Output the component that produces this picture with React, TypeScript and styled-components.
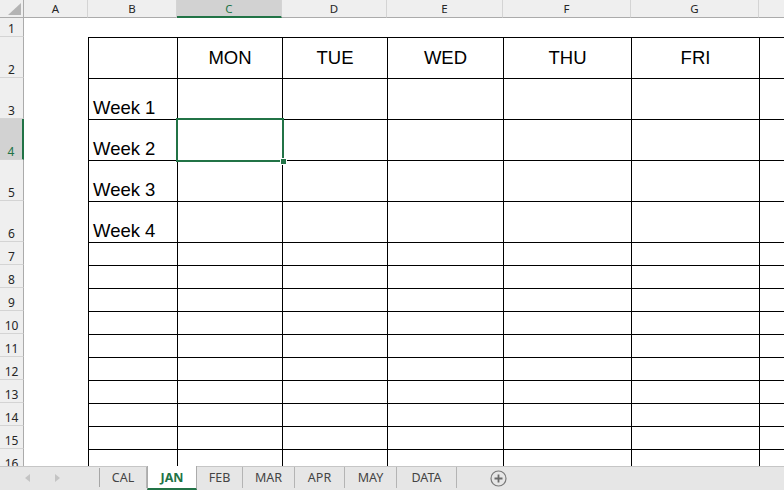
import { Fragment } from 'react';
import styled, { createGlobalStyle } from 'styled-components';

interface HeaderProps {
  active?: boolean;
}

interface CellProps {
  bordered?: boolean;
  align?: 'center' | 'week';
}

interface TabProps {
  active?: boolean;
}

const GlobalStyle = createGlobalStyle`
  html, body {
    margin: 0;
    padding: 0;
    background: #ffffff;
    overflow: hidden;
  }
  * {
    box-sizing: border-box;
  }
`;

const green = '#217346';

// H is only partly on screen, its letter sits past the window edge
const columns = ['A', 'B', 'C', 'D', 'E', 'F', 'G', ''];
const days = ['MON', 'TUE', 'WED', 'THU', 'FRI'];
const weeks = ['Week 1', 'Week 2', 'Week 3', 'Week 4'];
const sheets = ['CAL', 'JAN', 'FEB', 'MAR', 'APR', 'MAY', 'DATA'];

const Window = styled.div`
  width: 784px;
  height: 490px;
  display: flex;
  flex-direction: column;
  overflow: hidden;
  font-family: 'Noto Sans', 'Open Sans', sans-serif;
`;

const Grid = styled.div`
  width: 784px;
  height: 466px;
  overflow: hidden;
  display: grid;
  grid-template-columns: 24px 64px 89px 105px 105px 116px 128px 128px 64px;
  grid-template-rows: 18px 19px repeat(5, 41px) repeat(10, 23px);
`;

const Corner = styled.div`
  background: #efefef;
  border-right: 1px solid #ababab;
  border-bottom: 1px solid #ababab;
  display: flex;
  align-items: flex-end;
  justify-content: flex-end;
  padding: 0 2px 2px 0;
`;

const ColHeader = styled.div<HeaderProps>`
  background: ${(p) => (p.active ? '#d2d2d2' : '#efefef')};
  border-right: 1px solid #d4d4d4;
  border-bottom: ${(p) => (p.active ? `2px solid ${green}` : '1px solid #ababab')};
  color: ${(p) => (p.active ? green : '#262626')};
  font-size: 11.5px;
  display: flex;
  align-items: center;
  justify-content: center;
  line-height: 1;
  padding-top: ${(p) => (p.active ? '1px' : '0')};
`;

const RowHeader = styled.div<HeaderProps>`
  background: ${(p) => (p.active ? '#d2d2d2' : '#efefef')};
  border-right: ${(p) => (p.active ? `2px solid ${green}` : '1px solid #ababab')};
  border-bottom: 1px solid #d4d4d4;
  color: ${(p) => (p.active ? green : '#262626')};
  font-size: 12px;
  display: flex;
  align-items: flex-end;
  justify-content: center;
  padding-bottom: 1px;
  line-height: 1;
`;

const Cell = styled.div<CellProps>`
  position: relative;
  background: #ffffff;
  border-top: ${(p) => (p.bordered ? '1px solid #000000' : 'none')};
  border-left: ${(p) => (p.bordered ? '1px solid #000000' : 'none')};
  font-family: 'Liberation Sans', Arial, sans-serif;
  font-size: 18.5px;
  line-height: 22px;
  color: #000000;
  display: flex;
  white-space: nowrap;
  align-items: ${(p) => (p.align === 'week' ? 'flex-end' : 'center')};
  justify-content: ${(p) => (p.align === 'week' ? 'flex-start' : 'center')};
  padding-left: ${(p) => (p.align === 'week' ? '4px' : '0')};
`;

const Selection = styled.div`
  position: absolute;
  left: -2px;
  top: -2px;
  right: -2px;
  bottom: -2px;
  border: 2px solid ${green};
  z-index: 2;
  pointer-events: none;
`;

const FillHandle = styled.div`
  position: absolute;
  right: -5px;
  bottom: -5px;
  width: 7px;
  height: 7px;
  background: ${green};
  border: 1px solid #ffffff;
`;

const TabBar = styled.div`
  height: 24px;
  display: flex;
  align-items: stretch;
  background: #e6e6e6;
  border-top: 1px solid #c6c6c6;
`;

const NavArea = styled.div`
  width: 100px;
  display: flex;
  align-items: center;
  padding-left: 25px;
  gap: 23px;
  border-right: 1px solid #a6a6a6;
  margin: 1px 0 3px;
`;

const Tab = styled.div<TabProps>`
  display: flex;
  align-items: center;
  justify-content: center;
  font-size: 12.5px;
  font-weight: ${(p) => (p.active ? 700 : 400)};
  color: ${(p) => (p.active ? green : '#444444')};
  background: ${(p) => (p.active ? '#ffffff' : 'transparent')};
  margin-top: ${(p) => (p.active ? '-1px' : '0')};
  border-left: ${(p) => (p.active ? '1px solid #ababab' : 'none')};
  border-right: 1px solid ${(p) => (p.active ? '#ababab' : '#b4b4b4')};
  border-bottom: ${(p) => (p.active ? `2px solid ${green}` : 'none')};
  padding-top: ${(p) => (p.active ? '1px' : '0')};
  margin-bottom: ${(p) => (p.active ? '0' : '2px')};
`;

const AddArea = styled.div`
  display: flex;
  align-items: center;
  padding-left: 33px;
`;

const tabWidths: Record<string, number> = {
  CAL: 47,
  JAN: 50,
  FEB: 46,
  MAR: 52,
  APR: 50,
  MAY: 52,
  DATA: 60,
};

const ArrowLeft = () => (
  <svg width="6" height="8" viewBox="0 0 6 8">
    <path d="M5 0 L0 4 L5 8 Z" fill="#c4c4c4" />
  </svg>
);

const ArrowRight = () => (
  <svg width="6" height="8" viewBox="0 0 6 8">
    <path d="M1 0 L6 4 L1 8 Z" fill="#c4c4c4" />
  </svg>
);

const AddSheetIcon = () => (
  <svg width="17" height="17" viewBox="0 0 17 17">
    <circle cx="8.5" cy="8.5" r="7.5" fill="none" stroke="#7a7a7a" strokeWidth="1.2" />
    <path d="M8.5 4.5 V12.5 M4.5 8.5 H12.5" stroke="#6a6a6a" strokeWidth="1.8" />
  </svg>
);

const CornerTriangle = () => (
  <svg width="13" height="12" viewBox="0 0 13 12">
    <path d="M13 0 L13 12 L0 12 Z" fill="#b4b4b4" />
  </svg>
);

const renderCellContent = (row: number, col: number) => {
  // col: 0 = A ... 7 = H
  if (row === 2 && col >= 2 && col <= 6) return days[col - 2];
  if (row >= 3 && row <= 6 && col === 1) return weeks[row - 3];
  return null;
};

const App = () => {
  const rows = Array.from({ length: 16 }, (_, i) => i + 1);

  return (
    <Window>
      <GlobalStyle />
      <Grid>
        <Corner>
          <CornerTriangle />
        </Corner>
        {columns.map((c, ci) => (
          <ColHeader key={ci} active={c === 'C'}>
            {c}
          </ColHeader>
        ))}
        {rows.map((r) => (
          <Fragment key={r}>
            <RowHeader active={r === 4}>{r}</RowHeader>
            {columns.map((c, ci) => {
              const bordered = r >= 2 && ci >= 1;
              const content = renderCellContent(r, ci);
              const align = r >= 3 && ci === 1 ? 'week' : 'center';
              return (
                <Cell key={`${ci}-${r}`} bordered={bordered} align={align}>
                  {content}
                  {r === 4 && c === 'C' && (
                    <Selection>
                      <FillHandle />
                    </Selection>
                  )}
                </Cell>
              );
            })}
          </Fragment>
        ))}
      </Grid>
      <TabBar>
        <NavArea>
          <ArrowLeft />
          <ArrowRight />
        </NavArea>
        {sheets.map((s) => (
          <Tab key={s} active={s === 'JAN'} style={{ width: tabWidths[s] }}>
            {s}
          </Tab>
        ))}
        <AddArea>
          <AddSheetIcon />
        </AddArea>
      </TabBar>
    </Window>
  );
};

export default App;
